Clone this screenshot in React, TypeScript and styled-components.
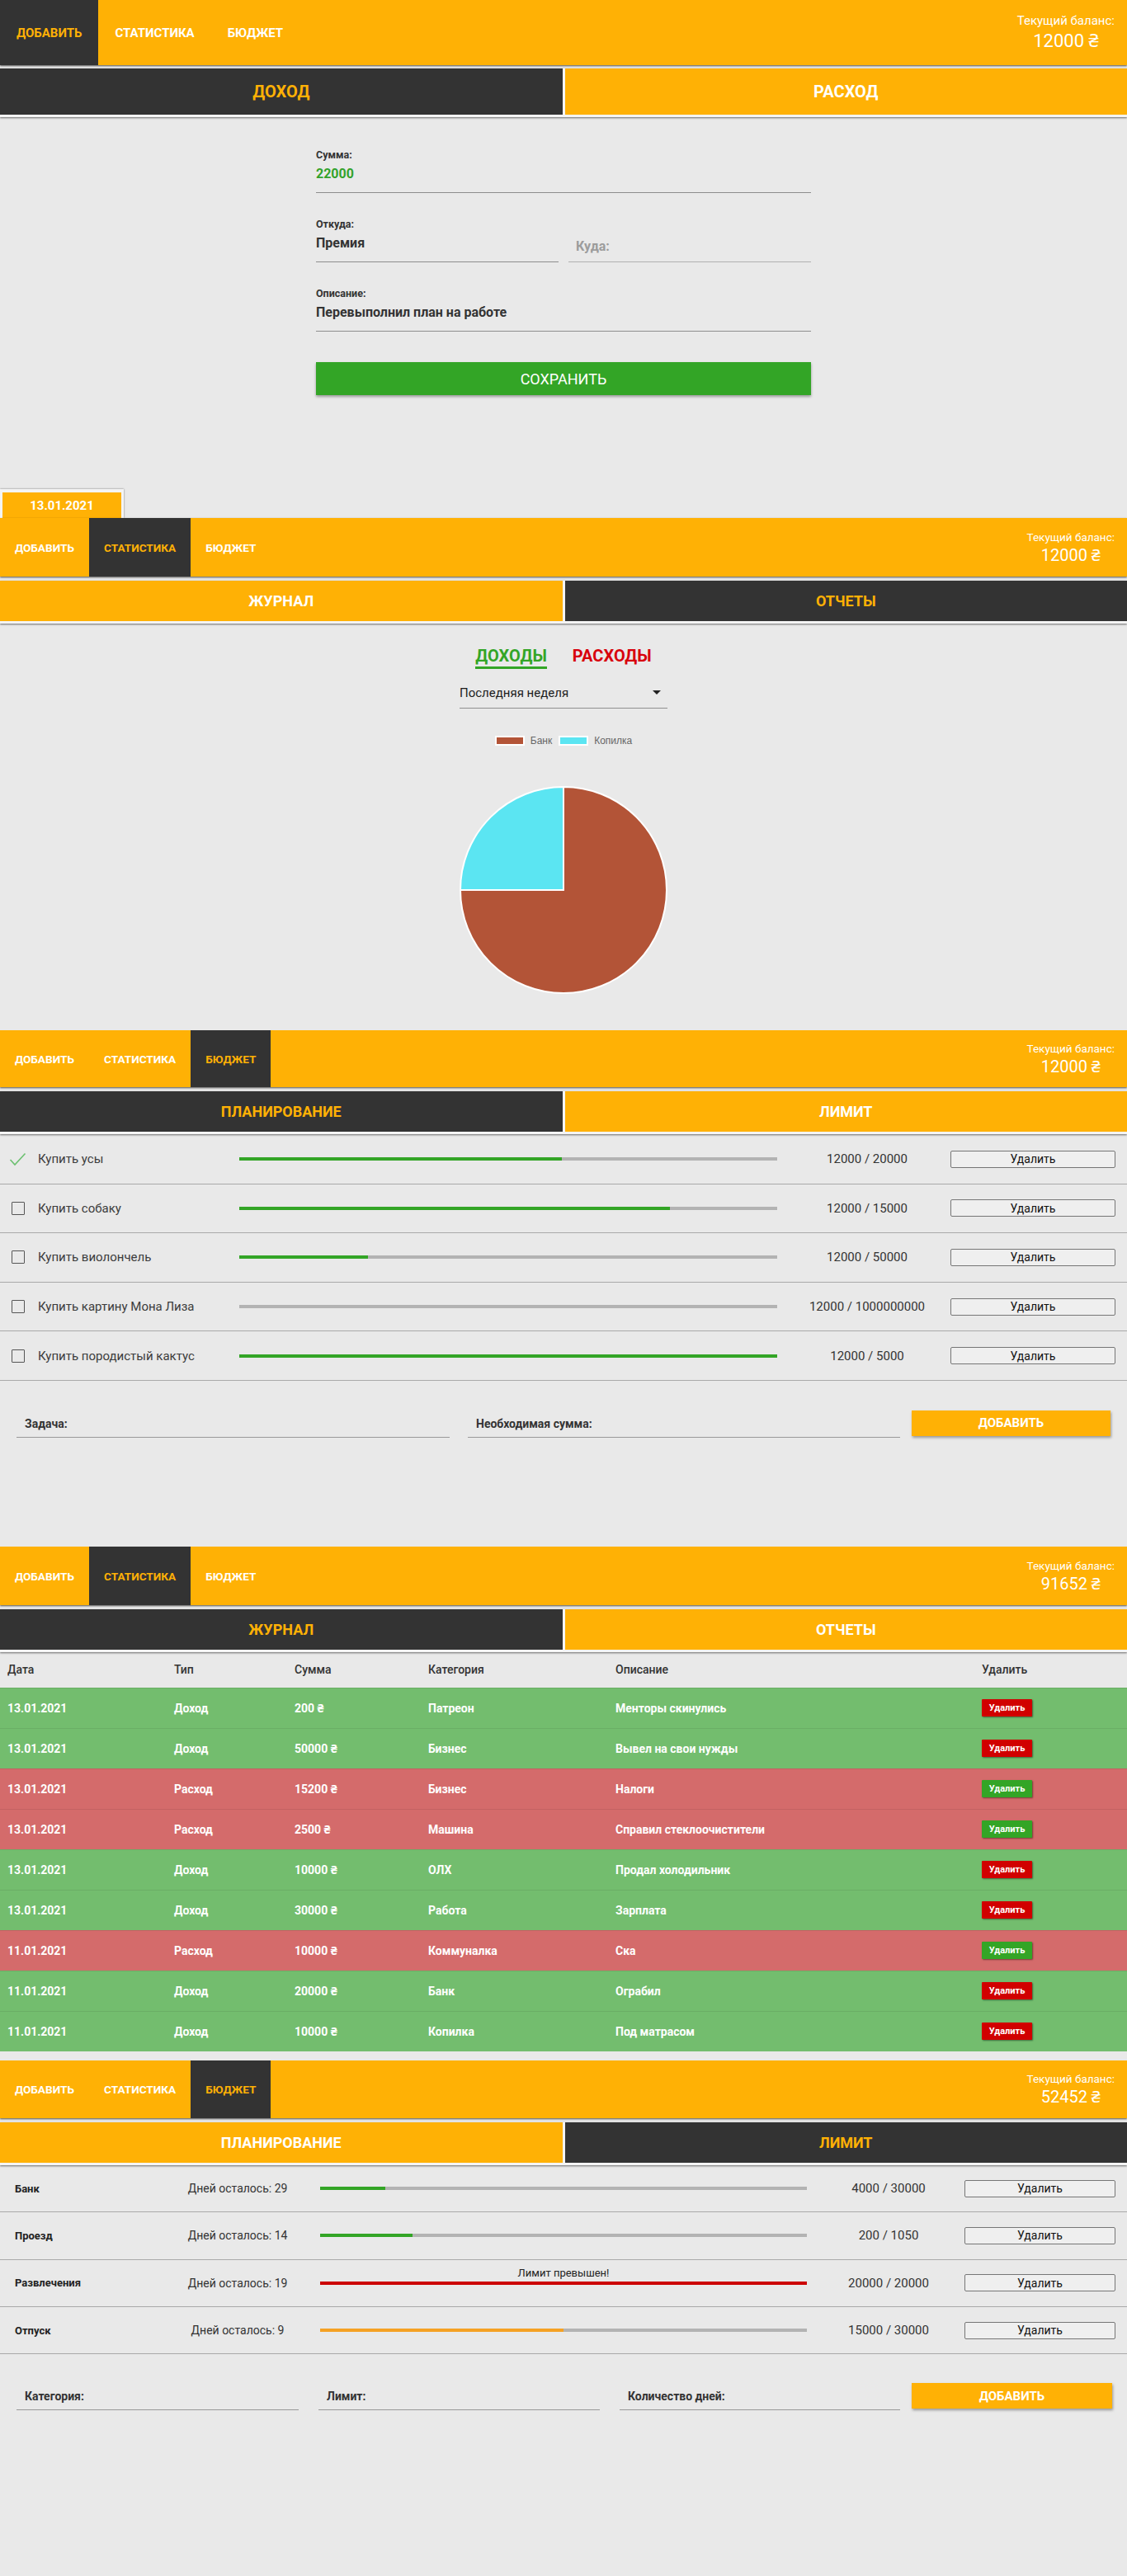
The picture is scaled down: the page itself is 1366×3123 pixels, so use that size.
import React from 'react';
import styled, { createGlobalStyle } from 'styled-components';

const ORANGE = '#FFB105';
const DARK = '#333333';
const GREEN = '#33A526';
const BG = '#E9E9E9';

const GlobalStyle = createGlobalStyle`
  html, body { margin: 0; padding: 0; background: ${BG}; }
  body { font-family: Roboto, "Noto Sans", "Liberation Sans", sans-serif; color: #333; }
  * { box-sizing: border-box; }
  button, input { font-family: inherit; }
`;

const Page = styled.div`
  width: 1366px;
  background: ${BG};
`;

const Screen = styled.section<{ $h: number }>`
  height: ${p => p.$h}px;
  display: flex;
  flex-direction: column;
  overflow: hidden;
`;

/* ---------- top bar ---------- */
const NavBar = styled.header<{ $h: number }>`
  flex: none;
  height: ${p => p.$h}px;
  background: ${ORANGE};
  display: flex;
  justify-content: space-between;
  align-items: stretch;
  box-shadow: 0 1px 2px rgba(0, 0, 0, 0.65);
`;

const NavTabs = styled.nav`
  display: flex;
  align-items: stretch;
`;

const NavTab = styled.a<{ $active?: boolean; $lg?: boolean }>`
  display: flex;
  align-items: center;
  padding: 0 ${p => (p.$lg ? 20 : 18)}px;
  font-size: ${p => (p.$lg ? 15 : 13.6)}px;
  font-weight: 700;
  text-transform: uppercase;
  color: ${p => (p.$active ? ORANGE : '#fff')};
  background: ${p => (p.$active ? DARK : 'transparent')};
`;

const Balance = styled.div`
  display: flex;
  flex-direction: column;
  justify-content: center;
  align-items: center;
  padding-right: 15px;
  color: #fff;
`;

const BalanceLabel = styled.span<{ $lg?: boolean }>`
  font-size: ${p => (p.$lg ? 15 : 13.5)}px;
  line-height: ${p => (p.$lg ? 20 : 18)}px;
`;

const BalanceValue = styled.span<{ $lg?: boolean }>`
  font-size: ${p => (p.$lg ? 22 : 20)}px;
  line-height: ${p => (p.$lg ? 30 : 26)}px;
`;

const NAV_ITEMS = ['Добавить', 'Статистика', 'Бюджет'];

function TopBar({ active, balance, height, lg }: { active: number; balance: string; height: number; lg?: boolean }) {
  return (
    <NavBar $h={height}>
      <NavTabs>
        {NAV_ITEMS.map((t, i) => (
          <NavTab key={t} $active={i === active} $lg={lg}>
            {t}
          </NavTab>
        ))}
      </NavTabs>
      <Balance>
        <BalanceLabel $lg={lg}>Текущий баланс:</BalanceLabel>
        <BalanceValue $lg={lg}>{balance} ₴</BalanceValue>
      </Balance>
    </NavBar>
  );
}

/* ---------- mode tabs ---------- */
const ModeBar = styled.div<{ $gapTop: number }>`
  flex: none;
  margin-top: ${p => p.$gapTop}px;
  display: grid;
  grid-template-columns: 1fr 1fr;
  column-gap: 3px;
  padding-bottom: 3px;
  background: #f4f4f4;
  box-shadow: 0 1px 2px rgba(0, 0, 0, 0.55);
`;

const ModeTab = styled.div<{ $active?: boolean; $h: number; $fs: number }>`
  height: ${p => p.$h}px;
  display: flex;
  align-items: center;
  justify-content: center;
  font-size: ${p => p.$fs}px;
  font-weight: 700;
  text-transform: uppercase;
  background: ${p => (p.$active ? DARK : ORANGE)};
  color: ${p => (p.$active ? ORANGE : '#fff')};
`;

function ModeTabs({ left, right, active, h, fs, gapTop }: { left: string; right: string; active: 0 | 1; h: number; fs: number; gapTop: number }) {
  return (
    <ModeBar $gapTop={gapTop}>
      <ModeTab $active={active === 0} $h={h} $fs={fs}>{left}</ModeTab>
      <ModeTab $active={active === 1} $h={h} $fs={fs}>{right}</ModeTab>
    </ModeBar>
  );
}

/* ---------- screen 1: add form ---------- */
const Form = styled.form`
  width: 600px;
  margin: 38px auto 0;
  display: flex;
  flex-direction: column;
  gap: 30px;
`;

const FieldRow = styled.div`
  display: grid;
  grid-template-columns: 294px 294px;
  column-gap: 12px;
  align-items: end;
`;

const Field = styled.label`
  display: flex;
  flex-direction: column;
`;

const FieldLabel = styled.span`
  font-size: 12.5px;
  line-height: 16px;
  font-weight: 700;
  color: #333;
`;

const FieldValue = styled.div<{ $color?: string; $placeholder?: boolean }>`
  height: 38px;
  padding-top: ${p => (p.$placeholder ? 8 : 0)}px;
  padding-bottom: 8px;
  padding-left: ${p => (p.$placeholder ? 9 : 0)}px;
  display: flex;
  align-items: center;
  font-size: 16px;
  font-weight: 700;
  color: ${p => (p.$placeholder ? '#9c9c9c' : p.$color || '#333')};
  border-bottom: 1.5px solid ${p => (p.$placeholder ? '#b0b0b0' : '#8d8d8d')};
`;

const SaveButton = styled.button`
  margin-top: 7px;
  height: 40px;
  border: none;
  background: ${GREEN};
  color: #fff;
  font-size: 18px;
  text-transform: uppercase;
  box-shadow: 0 2px 3px rgba(0, 0, 0, 0.35);
`;

/* ---------- screen 2: chart ---------- */
const DateTab = styled.div`
  flex: none;
  width: 150px;
  height: 35px;
  margin-top: 3px;
  padding: 4px 3px 0;
  background: #f4f4f4;
  box-shadow: 0 0 2px rgba(0, 0, 0, 0.5);
`;

const DateTabInner = styled.div`
  height: 100%;
  background: ${ORANGE};
  color: #fff;
  font-size: 15px;
  font-weight: 700;
  display: flex;
  align-items: center;
  justify-content: center;
`;

const ChartArea = styled.div`
  display: flex;
  flex-direction: column;
  align-items: center;
  padding-top: 27px;
`;

const KindSwitch = styled.div`
  display: flex;
  gap: 31px;
`;

const KindTab = styled.span<{ $color: string; $active?: boolean }>`
  font-size: 20px;
  line-height: 25px;
  font-weight: 700;
  text-transform: uppercase;
  color: ${p => p.$color};
  border-bottom: 3px solid ${p => (p.$active ? p.$color : 'transparent')};
`;

const PeriodSelect = styled.div`
  width: 252px;
  height: 34px;
  margin-top: 14px;
  padding: 0 8px 4px 0;
  display: flex;
  align-items: center;
  justify-content: space-between;
  border-bottom: 1px solid #8f8f8f;
  font-size: 15px;
  color: #1d1d1d;
`;

const Caret = styled.span`
  width: 0;
  height: 0;
  border-left: 5px solid transparent;
  border-right: 5px solid transparent;
  border-top: 5px solid #222;
`;

const Legend = styled.div`
  margin-top: 32px;
  display: flex;
  align-items: center;
  gap: 8px;
  font-family: "Liberation Sans", Arial, sans-serif;
  font-size: 12px;
  color: #666;
`;

const LegendItem = styled.span`
  display: flex;
  align-items: center;
  gap: 7px;
`;

const Swatch = styled.span<{ $c: string }>`
  width: 36px;
  height: 12px;
  background: ${p => p.$c};
  border: 2px solid #fff;
`;

const PieSvg = styled.svg`
  margin-top: 47px;
  display: block;
`;

/* ---------- screen 3: goals ---------- */
const GoalList = styled.div`
  padding-top: 1px;
  display: flex;
  flex-direction: column;
`;

const GoalRow = styled.div`
  height: 59.6px;
  display: grid;
  grid-template-columns: 46px 244px 652px 210px 200px;
  align-items: center;
  border-bottom: 1px solid #a9a9a9;
`;

const CheckBox = styled.span`
  width: 16px;
  height: 16px;
  margin-left: 14px;
  border: 1.5px solid #555;
  border-radius: 1px;
`;

const CheckMark = styled.svg`
  margin-left: 11px;
  display: block;
`;

const GoalName = styled.span`
  font-size: 15px;
  color: #3c3c3c;
`;

const Track = styled.div`
  position: relative;
  height: 4px;
  background: #b3b3b3;
`;

const Fill = styled.div<{ $c: string }>`
  height: 100%;
  background: ${p => p.$c};
`;

const OverLabel = styled.span`
  position: absolute;
  left: 0;
  right: 0;
  bottom: calc(100% + 2px);
  text-align: center;
  font-size: 13px;
  line-height: 16px;
  color: #222;
`;

const Amount = styled.span<{ $pl: number }>`
  padding-left: ${p => p.$pl}px;
  text-align: center;
  font-size: 15px;
  color: #333;
`;

const DeleteButton = styled.button`
  height: 21px;
  padding: 0;
  background: #efefef;
  border: 1px solid #767676;
  border-radius: 2px;
  font-size: 14px;
  color: #111;
`;

const AddForm = styled.div<{ $mt: number }>`
  margin-top: ${p => p.$mt}px;
  padding-left: 20px;
  display: flex;
  align-items: flex-start;
  gap: 14px;
`;

const AddFields = styled.div<{ $gap: number }>`
  display: flex;
  gap: ${p => p.$gap}px;
`;

const AddField = styled.div<{ $w: number }>`
  width: ${p => p.$w}px;
  height: 33px;
  padding: 0 10px 7px;
  display: flex;
  align-items: flex-end;
  border-bottom: 1px solid #999;
  font-size: 14px;
  line-height: 18px;
  font-weight: 700;
  color: #333;
`;

const AddButton = styled.button<{ $w: number }>`
  width: ${p => p.$w}px;
  height: 31px;
  border: none;
  background: ${ORANGE};
  color: #fff;
  font-size: 15px;
  font-weight: 700;
  text-transform: uppercase;
  box-shadow: 1px 2px 3px rgba(0, 0, 0, 0.35);
`;

/* ---------- screen 4: journal table ---------- */
const Table = styled.table`
  width: 100%;
  border-collapse: collapse;
  table-layout: fixed;
`;

const Th = styled.th<{ $w: number }>`
  width: ${p => p.$w}px;
  height: 43px;
  padding: 0 9px;
  text-align: left;
  font-size: 14px;
  font-weight: 500;
  color: #333;
`;

const Tr = styled.tr<{ $expense?: boolean }>`
  height: 49px;
  background: ${p => (p.$expense ? '#D46B6B' : '#73BD6E')};
  border-top: 1px solid rgba(0, 0, 0, 0.08);
`;

const Td = styled.td`
  padding: 0 9px;
  font-size: 14px;
  font-weight: 700;
  color: #fff;
`;

const SmallDelete = styled.button<{ $expense?: boolean }>`
  width: 61px;
  height: 21px;
  padding: 0;
  border: none;
  border-radius: 1px;
  background: ${p => (p.$expense ? GREEN : '#D10000')};
  color: #fff;
  font-size: 11px;
  font-weight: 700;
  box-shadow: 1px 1px 2px rgba(0, 0, 0, 0.45);
`;

/* ---------- screen 5: limits ---------- */
const LimitList = styled.div`
  display: flex;
  flex-direction: column;
`;

const LimitRow = styled.div`
  height: 57.3px;
  padding-left: 18px;
  display: grid;
  grid-template-columns: 182px 188px 590px 191px 183px;
  align-items: center;
  border-bottom: 1px solid #a9a9a9;
`;

const LimitName = styled.span`
  font-size: 13px;
  font-weight: 700;
  color: #222;
`;

const DaysLeft = styled.span`
  padding-right: 12px;
  text-align: center;
  font-size: 14px;
  color: #333;
`;

/* ---------- data ---------- */
const goals = [
  { name: 'Купить усы', have: 12000, need: 20000, done: true },
  { name: 'Купить собаку', have: 12000, need: 15000 },
  { name: 'Купить виолончель', have: 12000, need: 50000 },
  { name: 'Купить картину Мона Лиза', have: 12000, need: 1000000000 },
  { name: 'Купить породистый кактус', have: 12000, need: 5000 },
];

const journal = [
  ['13.01.2021', 'Доход', '200', 'Патреон', 'Менторы скинулись'],
  ['13.01.2021', 'Доход', '50000', 'Бизнес', 'Вывел на свои нужды'],
  ['13.01.2021', 'Расход', '15200', 'Бизнес', 'Налоги'],
  ['13.01.2021', 'Расход', '2500', 'Машина', 'Справил стеклоочистители'],
  ['13.01.2021', 'Доход', '10000', 'ОЛХ', 'Продал холодильник'],
  ['13.01.2021', 'Доход', '30000', 'Работа', 'Зарплата'],
  ['11.01.2021', 'Расход', '10000', 'Коммуналка', 'Ска'],
  ['11.01.2021', 'Доход', '20000', 'Банк', 'Ограбил'],
  ['11.01.2021', 'Доход', '10000', 'Копилка', 'Под матрасом'],
];

const limits = [
  { name: 'Банк', days: 29, spent: 4000, limit: 30000, color: GREEN },
  { name: 'Проезд', days: 14, spent: 200, limit: 1050, color: GREEN },
  { name: 'Развлечения', days: 19, spent: 20000, limit: 20000, color: '#CC0000', over: true },
  { name: 'Отпуск', days: 9, spent: 15000, limit: 30000, color: '#F5A124' },
];

const pct = (a: number, b: number) => Math.min(100, (a / b) * 100);

export default function App() {
  return (
    <Page>
      <GlobalStyle />

      {/* Screen 1 */}
      <Screen $h={590}>
        <TopBar active={0} balance="12000" height={79} lg />
        <ModeTabs left="Доход" right="Расход" active={0} h={56} fs={20} gapTop={4} />
        <Form>
          <Field>
            <FieldLabel>Сумма:</FieldLabel>
            <FieldValue $color="#33A22B">22000</FieldValue>
          </Field>
          <FieldRow>
            <Field>
              <FieldLabel>Откуда:</FieldLabel>
              <FieldValue>Премия</FieldValue>
            </Field>
            <Field>
              <FieldValue $placeholder>Куда:</FieldValue>
            </Field>
          </FieldRow>
          <Field>
            <FieldLabel>Описание:</FieldLabel>
            <FieldValue>Перевыполнил план на работе</FieldValue>
          </Field>
          <SaveButton type="button">Сохранить</SaveButton>
        </Form>
      </Screen>

      {/* Screen 2 */}
      <Screen $h={659}>
        <DateTab>
          <DateTabInner>13.01.2021</DateTabInner>
        </DateTab>
        <TopBar active={1} balance="12000" height={71} />
        <ModeTabs left="Журнал" right="Отчеты" active={1} h={49} fs={18} gapTop={5} />
        <ChartArea>
          <KindSwitch>
            <KindTab $color="#33A526" $active>Доходы</KindTab>
            <KindTab $color="#D8000C">Расходы</KindTab>
          </KindSwitch>
          <PeriodSelect>
            <span>Последняя неделя</span>
            <Caret />
          </PeriodSelect>
          <Legend>
            <LegendItem>
              <Swatch $c="#B35437" />
              Банк
            </LegendItem>
            <LegendItem>
              <Swatch $c="#5BE5F2" />
              Копилка
            </LegendItem>
          </Legend>
          <PieSvg width="254" height="254" viewBox="0 0 254 254">
            <path d="M127 127 L2 127 A125 125 0 1 0 127 2 Z" fill="#B35437" stroke="#fff" strokeWidth="2" strokeLinejoin="round" />
            <path d="M127 127 L127 2 A125 125 0 0 0 2 127 Z" fill="#5BE5F2" stroke="#fff" strokeWidth="2" strokeLinejoin="round" />
          </PieSvg>
        </ChartArea>
      </Screen>

      {/* Screen 3 */}
      <Screen $h={626}>
        <TopBar active={2} balance="12000" height={69} />
        <ModeTabs left="Планирование" right="Лимит" active={0} h={49} fs={18} gapTop={5} />
        <GoalList>
          {goals.map(g => (
            <GoalRow key={g.name}>
              {g.done ? (
                <CheckMark width="21" height="17" viewBox="0 0 21 17">
                  <path d="M1.5 9 L7 15 L19.5 1.5" fill="none" stroke="#6CC070" strokeWidth="1.6" />
                </CheckMark>
              ) : (
                <CheckBox />
              )}
              <GoalName>{g.name}</GoalName>
              <Track>
                <Fill $c={GREEN} style={{ width: `${pct(g.have, g.need)}%` }} />
              </Track>
              <Amount $pl={8}>
                {g.have} / {g.need}
              </Amount>
              <DeleteButton type="button">Удалить</DeleteButton>
            </GoalRow>
          ))}
        </GoalList>
        <AddForm $mt={36}>
          <AddFields $gap={22}>
            <AddField $w={525}>Задача:</AddField>
            <AddField $w={524}>Необходимая сумма:</AddField>
          </AddFields>
          <AddButton type="button" $w={241}>Добавить</AddButton>
        </AddForm>
      </Screen>

      {/* Screen 4 */}
      <Screen $h={623}>
        <TopBar active={1} balance="91652" height={71} />
        <ModeTabs left="Журнал" right="Отчеты" active={0} h={49} fs={18} gapTop={5} />
        <Table>
          <thead>
            <tr>
              <Th $w={202}>Дата</Th>
              <Th $w={146}>Тип</Th>
              <Th $w={162}>Сумма</Th>
              <Th $w={227}>Категория</Th>
              <Th $w={444}>Описание</Th>
              <Th $w={185}>Удалить</Th>
            </tr>
          </thead>
          <tbody>
            {journal.map((r, i) => {
              const expense = r[1] === 'Расход';
              return (
                <Tr key={i} $expense={expense}>
                  <Td>{r[0]}</Td>
                  <Td>{r[1]}</Td>
                  <Td>{r[2]} ₴</Td>
                  <Td>{r[3]}</Td>
                  <Td>{r[4]}</Td>
                  <Td>
                    <SmallDelete type="button" $expense={expense}>Удалить</SmallDelete>
                  </Td>
                </Tr>
              );
            })}
          </tbody>
        </Table>
      </Screen>

      {/* Screen 5 */}
      <Screen $h={625}>
        <TopBar active={2} balance="52452" height={70} />
        <ModeTabs left="Планирование" right="Лимит" active={1} h={49} fs={18} gapTop={5} />
        <LimitList>
          {limits.map(l => (
            <LimitRow key={l.name}>
              <LimitName>{l.name}</LimitName>
              <DaysLeft>Дней осталось: {l.days}</DaysLeft>
              <Track>
                {l.over && <OverLabel>Лимит превышен!</OverLabel>}
                <Fill $c={l.color} style={{ width: `${pct(l.spent, l.limit)}%` }} />
              </Track>
              <Amount $pl={7}>
                {l.spent} / {l.limit}
              </Amount>
              <DeleteButton type="button">Удалить</DeleteButton>
            </LimitRow>
          ))}
        </LimitList>
        <AddForm $mt={35}>
          <AddFields $gap={24}>
            <AddField $w={342}>Категория:</AddField>
            <AddField $w={341}>Лимит:</AddField>
            <AddField $w={340}>Количество дней:</AddField>
          </AddFields>
          <AddButton type="button" $w={243}>Добавить</AddButton>
        </AddForm>
      </Screen>
    </Page>
  );
}
